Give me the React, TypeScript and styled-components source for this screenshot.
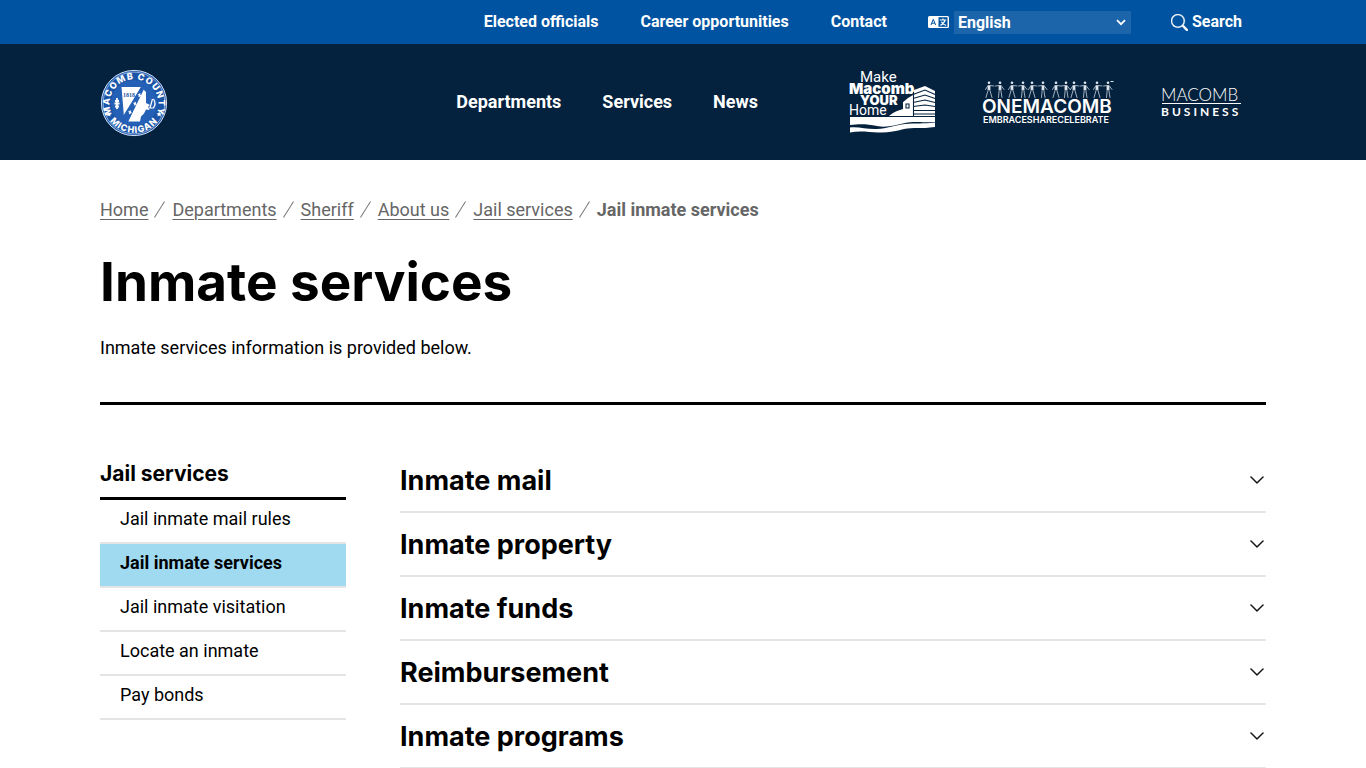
import React from "react";
import styled, { createGlobalStyle } from "styled-components";
import { BsSearch, BsChevronDown } from "react-icons/bs";

const GlobalStyle = createGlobalStyle`
  *, *::before, *::after { box-sizing: border-box; }
  body {
    margin: 0;
    background: #fff;
    color: #000;
    font-family: Roboto, "Liberation Sans", sans-serif;
    font-size: 18px;
    line-height: 28px;
  }
  h1, h2, h3, p, ul, ol { margin: 0; padding: 0; }
  ul, ol { list-style: none; }
  a { color: inherit; text-decoration: none; }
`;

const TopBar = styled.div`
  display: flex;
  align-items: center;
  justify-content: flex-end;
  height: 44px;
  padding: 0 124px 0 100px;
  background: #0053a0;
  color: #fff;
  font-size: 16px;
  font-weight: 700;
`;

const TopLinks = styled.ul`
  display: flex;
  gap: 42px;
`;

const Language = styled.label`
  display: flex;
  align-items: center;
  gap: 5px;
  margin: 0 40px 0 41px;
`;

const SelectWrap = styled.span`
  display: grid;
  grid-template-columns: 177px;
  align-items: center;

  & > * { grid-area: 1 / 1; }
  & > svg {
    justify-self: end;
    margin-right: 5px;
    pointer-events: none;
  }
`;

const LanguageSelect = styled.select`
  appearance: none;
  width: 100%;
  height: 23px;
  padding: 0 4px;
  border: 0;
  border-radius: 0;
  background: #1d65aa;
  color: #fff;
  font: inherit;
  line-height: 23px;
`;

const SearchButton = styled.button`
  display: flex;
  align-items: center;
  gap: 4px;
  padding: 0;
  border: 0;
  background: none;
  color: inherit;
  font: inherit;

  svg { stroke: currentColor; stroke-width: 0.3; }
`;

const Header = styled.header`
  display: flex;
  align-items: center;
  height: 116px;
  padding: 0 124px 0 100px;
  background: #04213d;
  color: #fff;
`;

const SealLink = styled.a`
  display: flex;
  margin-right: auto;
`;

const MainNav = styled.nav`
  margin-right: 90px;

  ul {
    display: flex;
    gap: 41px;
    font-weight: 700;
  }
`;

const Partners = styled.div`
  display: flex;
  align-items: center;
  gap: 46px;

  a, svg { display: block; }
  svg { overflow: visible; }
`;

const Page = styled.main`
  padding: 36px 100px 0;
`;

const Crumbs = styled.ol`
  display: flex;
  color: #666;

  li + li::before {
    content: "";
    display: inline-block;
    width: 1px;
    height: 19px;
    margin: 0 12px 0 11px;
    background: #777;
    transform: rotate(32deg);
    vertical-align: -3px;
  }
  a {
    text-decoration: underline;
    text-decoration-thickness: 1px;
    text-underline-offset: 3px;
  }
  [aria-current] { font-weight: 700; }
`;

const Title = styled.h1`
  margin: 24px 0 18px;
  font-family: Inter, "Liberation Sans", sans-serif;
  font-size: 53px;
  font-weight: 700;
  line-height: 68px;
`;

const Intro = styled.p`
  padding-bottom: 40px;
  border-bottom: 3px solid #000;
`;

const Columns = styled.div`
  display: flex;
  align-items: flex-start;
  gap: 54px;
  padding-top: 44px;
`;

const Sidebar = styled.nav`
  flex: 0 0 246px;
  padding-top: 12px;
`;

const SideTitle = styled.h2`
  padding-bottom: 10px;
  border-bottom: 3px solid #000;
  font-family: Inter, "Liberation Sans", sans-serif;
  font-size: 21px;
  font-weight: 700;
  line-height: 26px;
`;

const SideLink = styled.a<{ $active?: boolean }>`
  display: block;
  height: 44px;
  padding: 5px 20px;
  border-bottom: 2px solid #e4e4e4;
  background: ${(p) => (p.$active ? "#9fdaf0" : "transparent")};
  font-weight: ${(p) => (p.$active ? 700 : 400)};
`;

const Accordion = styled.div`
  flex: 1;
  min-width: 0;
`;

const AccordionButton = styled.button`
  display: flex;
  align-items: center;
  justify-content: space-between;
  width: 100%;
  height: 64px;
  padding: 0 1px 0 0;
  border: 0;
  border-bottom: 2px solid #e4e4e4;
  background: none;
  color: #000;
  font-family: Inter, "Liberation Sans", sans-serif;
  font-size: 27px;
  font-weight: 700;
  text-align: left;

  svg { stroke: currentColor; stroke-width: 0.5; }
`;

const LanguageIcon = () => (
  <svg width="21" height="12" viewBox="0 0 21 12" aria-hidden="true">
    <rect width="21" height="12" rx="1.5" fill="#fff" />
    <path d="M3 9 5.3 3.2 7.6 9M3.8 7.2h3" fill="none" stroke="#0053a0" strokeWidth="1" />
    <rect x="10.500" y="1.2" width="9" height="9.600" fill="#0053a0" />
    <path d="M11.800 4h6.400M15 2.400V4M17 4.200c-.6 2.400-2 4-4.600 5.200M13.400 5.800c1 1.800 2.400 2.900 4.600 3.500" fill="none" stroke="#fff" strokeWidth="1.200" />
  </svg>
);

const Seal = () => (
  <svg width="68" height="70" viewBox="0 -2 68 70" role="img" aria-label="Macomb County, Michigan">
    <defs>
      <path id="seal-top" d="M12.700 47A24.500 24.500 0 1 1 55.300 47" />
      <path id="seal-bottom" d="M4.700 41A30.200 30.200 0 0 0 63.300 41" />
    </defs>
    <circle cx="34" cy="34" r="33" fill="#1b55a8" />
    <circle cx="34" cy="34" r="32.600" fill="none" stroke="#e6effa" strokeWidth=".9" />
    <circle cx="34" cy="34" r="30.900" fill="none" stroke="#b9d0ee" strokeWidth=".7" />
    <circle cx="34" cy="34" r="23" fill="#2460b5" />
    <g fill="#fff" fontFamily="Inter, sans-serif" fontWeight="800" fontSize="9" letterSpacing="1">
      <text textAnchor="middle"><textPath href="#seal-top" startOffset="50%">MACOMB COUNTY</textPath></text>
      <text textAnchor="middle"><textPath href="#seal-bottom" startOffset="50%">MICHIGAN</textPath></text>
    </g>
    <path fill="#fff" d="m8.800 42.500.8 1.700 1.900.2-1.400 1.300.4 1.900-1.700-1-1.600 1 .3-1.900-1.400-1.300 1.900-.2zM59.200 42.500l.8 1.700 1.900.2-1.400 1.300.4 1.900-1.700-1-1.600 1 .3-1.900-1.400-1.300 1.900-.2z" />
    <path fill="#fff" d="M21.500 18H41L24 48z" />
    <path fill="#fff" d="m43 20 3 3v11l4 2-2 2 1.500 3-3.500-.5-2 4-3 3-1 5H28z" />
    <path fill="#2460b5" d="M41 18h4L28 53h-4.500l-1-5z" />
    <path stroke="#fff" strokeWidth="1.300" d="m38 25.500 3 1.500M40 24.500l-1 3.500M33.500 34l3 1.500M35.500 33l-1 3.500M28.500 42.500l3 1.500M30.500 41.500 29.500 45" />
    <text x="23" y="28" fill="#1b55a8" fontFamily="Liberation Serif, serif" fontWeight="700" fontSize="6">1818</text>
    <path fill="none" stroke="#fff" strokeWidth="1.800" d="M17 29v11M14.500 34.500h5M15 32h4M15 37.500h4" />
    <path fill="none" stroke="#fff" strokeWidth="1.200" d="m52.500 30-2.500 9M48.500 39h5c2-3 2-6 0-9" />
  </svg>
);

const HomeLogo = () => (
  <svg width="88" height="64" viewBox="0 0 88 64" role="img" aria-label="Make Macomb your home">
    <g fill="#fff" fontFamily="Roboto, sans-serif">
      <text x="12" y="12" fontSize="15">Make</text>
      <text x="1" y="24" fontFamily="Inter, sans-serif" fontSize="15" fontWeight="900">Macomb</text>
      <text x="12" y="35" fontFamily="Inter, sans-serif" fontSize="13" fontWeight="900">YOUR</text>
      <text x="1" y="45" fontSize="14">Home</text>
    </g>
    <g fill="#fff">
      <path d="M66 20 77 16l10 5v25H66z" />
      <path d="m54 33 6-5 5-3v21H41c2-2 4-3 8-5l6-2v-7z" />
      <path d="M2 47h85v5c-14 1-20-1-30 1s-18 5-28 3-17-2-27-1z" />
      <path d="M2 57.500c9-1 17 2 27 1.500s18-4 28-5 18 0 30-1.500V57c-14 2-22 0-31 2-9 2.500-17 4-26 3.500S11 60.500 2 62.500z" />
    </g>
    <path d="M65 24.500 77 20l10 4.500M65 28.500l12-3.500 10 3.500M65 32.500l12-2.500 10 2.500M65 36.500l12-1.500 10 1.500M65 40.500h22M65 44h22M65.500 22v24M58 34h3v4h-3z" fill="none" stroke="#04213d" strokeWidth="1.100" />
  </svg>
);

const figures = [7, 18, 30, 41, 50, 61, 74, 84, 92, 103, 115, 126];

const OneMacombLogo = () => (
  <svg width="133" height="46" viewBox="0 0 133 46" role="img" aria-label="One Macomb">
    <g fill="none" stroke="#b4c0cc" strokeWidth=".9" strokeLinecap="round">
      {figures.map((x, i) => (
        <g key={x} transform={`translate(${x} 0)`}>
          <circle cx="0" cy="3.800" r="1.300" fill="#dfe6ed" stroke="none" />
          <path d="M0 6.500v4.500" stroke="#dfe6ed" strokeWidth="2.800" strokeLinecap="butt" />
          <path d={i % 2 ? "M-4.500 7-1 6.500h2l3 4M-.8 11-1.500 18.500M.8 11 2 18.500" : "M-3.500 10.500-1 6.500h2l4 .5M-.8 11-3 18.500M.8 11 3 18.500"} />
        </g>
      ))}
    </g>
    <path d="M128.500 2.500h3" stroke="#dfe6ed" />
    <g fill="#fff">
      <text x="0" y="34" fontFamily="Inter, sans-serif" fontSize="19" fontWeight="600">ONEMACOMB</text>
      <text x="1" y="44" fontFamily="Inter, sans-serif" fontSize="9" fontWeight="600">EMBRACESHARECELEBRATE</text>
    </g>
  </svg>
);

const BusinessLogo = () => (
  <svg width="81" height="32" viewBox="0 0 81 32" role="img" aria-label="Macomb Business">
    <g fill="#fff" fontFamily="Lato, sans-serif">
      <text x="0" y="15" fontSize="17" fontWeight="300">MACOMB</text>
      <text x="0" y="30" fontSize="12" fontWeight="700" letterSpacing="3">BUSINESS</text>
    </g>
    <path d="M1 17.500h79" stroke="#fff" />
  </svg>
);

const crumbs = ["Home", "Departments", "Sheriff", "About us", "Jail services"];
const sideLinks = ["Jail inmate mail rules", "Jail inmate services", "Jail inmate visitation", "Locate an inmate", "Pay bonds"];
const sections = ["Inmate mail", "Inmate property", "Inmate funds", "Reimbursement", "Inmate programs"];

export default function App() {
  return (
    <>
      <GlobalStyle />
      <TopBar>
        <TopLinks>
          {["Elected officials", "Career opportunities", "Contact"].map((t) => (
            <li key={t}><a href="#">{t}</a></li>
          ))}
        </TopLinks>
        <Language>
          <LanguageIcon />
          <SelectWrap>
            <LanguageSelect aria-label="Language" defaultValue="English">
              <option>English</option>
            </LanguageSelect>
            <svg width="10" height="7" viewBox="0 0 10 7" aria-hidden="true">
              <path d="m1 1.200 4 4 4-4" fill="none" stroke="#fff" strokeWidth="1.800" />
            </svg>
          </SelectWrap>
        </Language>
        <SearchButton type="button"><BsSearch size={17} aria-hidden />Search</SearchButton>
      </TopBar>
      <Header>
        <SealLink href="#"><Seal /></SealLink>
        <MainNav aria-label="Main">
          <ul>
            {["Departments", "Services", "News"].map((t) => (
              <li key={t}><a href="#">{t}</a></li>
            ))}
          </ul>
        </MainNav>
        <Partners>
          <a href="#"><HomeLogo /></a>
          <a href="#"><OneMacombLogo /></a>
          <a href="#"><BusinessLogo /></a>
        </Partners>
      </Header>
      <Page>
        <nav aria-label="Breadcrumb">
          <Crumbs>
            {crumbs.map((t) => (
              <li key={t}><a href="#">{t}</a></li>
            ))}
            <li><span aria-current="page">Jail inmate services</span></li>
          </Crumbs>
        </nav>
        <Title>Inmate services</Title>
        <Intro>Inmate services information is provided below.</Intro>
        <Columns>
          <Sidebar aria-label="Jail services">
            <SideTitle>Jail services</SideTitle>
            <ul>
              {sideLinks.map((t) => (
                <li key={t}><SideLink href="#" $active={t === "Jail inmate services"}>{t}</SideLink></li>
              ))}
            </ul>
          </Sidebar>
          <Accordion>
            {sections.map((t) => (
              <h3 key={t}>
                <AccordionButton type="button" aria-expanded={false}>
                  {t}
                  <BsChevronDown size={16} aria-hidden />
                </AccordionButton>
              </h3>
            ))}
          </Accordion>
        </Columns>
      </Page>
    </>
  );
}
